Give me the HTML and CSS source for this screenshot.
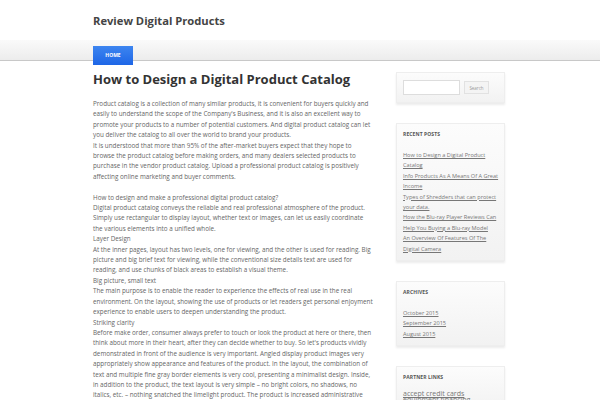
FILE: index.html
```html
<!DOCTYPE html>
<html>
<head>
<meta charset="utf-8">
<link rel="stylesheet" href="styles.css">
</head>
<body>
<header class="site-header">
  <div class="wrap">
    <div class="site-title">Review Digital Products</div>
  </div>
</header>
<nav class="navbar">
  <div class="wrap">
    <a class="nav-item active">HOME</a>
  </div>
</nav>
<div class="wrap page">
  <main class="content">
    <h1 class="entry-title">How to Design a Digital Product Catalog</h1>
    <div class="entry">
      <p>Product catalog is a collection of many similar products, it is convenient for buyers quickly and easily to understand the scope of the Company's Business, and it is also an excellent way to promote your products to a number of potential customers. And digital product catalog can let you deliver the catalog to all over the world to brand your products.<br>
      It is understood that more than 95% of the after-market buyers expect that they hope to browse the product catalog before making orders, and many dealers selected products to purchase in the vendor product catalog. Upload a professional product catalog is positively affecting online marketing and buyer comments.</p>
      <p>How to design and make a professional digital product catalog?<br>
      Digital product catalog conveys the reliable and real professional atmosphere of the product. Simply use rectangular to display layout, whether text or images, can let us easily coordinate the various elements into a unified whole.<br>
      Layer Design<br>
      At the inner pages, layout has two levels, one for viewing, and the other is used for reading. Big picture and big brief text for viewing, while the conventional size details text are used for reading, and use chunks of black areas to establish a visual theme.<br>
      Big picture, small text<br>
      The main purpose is to enable the reader to experience the effects of real use in the real environment. On the layout, showing the use of products or let readers get personal enjoyment experience to enable users to deepen understanding the product.<br>
      Striking clarity<br>
      Before make order, consumer always prefer to touch or look the product at here or there, then think about more in their heart, after they can decide whether to buy. So let's products vividly demonstrated in front of the audience is very important. Angled display product images very appropriately show appearance and features of the product. In the layout, the combination of text and multiple fine gray border elements is very cool, presenting a minimalist design. Inside, in addition to the product, the text layout is very simple – no bright colors, no shadows, no italics, etc. – nothing snatched the limelight product. The product is increased administrative levels by using a variety of colors and sizes to be in an orderly manner.</p>
    </div>
  </main>
  <aside class="sidebar">
    <div class="widget search-widget">
      <input class="search-input" type="text">
      <button class="search-btn">Search</button>
    </div>
    <div class="widget">
      <h3 class="widget-title">RECENT POSTS</h3>
      <ul class="links">
        <li><a>How to Design a Digital Product Catalog</a></li>
        <li><a>Info Products As A Means Of A Great Income</a></li>
        <li><a>Types of Shredders that can protect your data.</a></li>
        <li><a>How the Blu-ray Player Reviews Can Help You Buying a Blu-ray Model</a></li>
        <li><a>An Overview Of Features Of The Digital Camera</a></li>
      </ul>
    </div>
    <div class="widget">
      <h3 class="widget-title">ARCHIVES</h3>
      <ul class="links">
        <li><a>October 2015</a></li>
        <li><a>September 2015</a></li>
        <li><a>August 2015</a></li>
      </ul>
    </div>
    <div class="widget">
      <h3 class="widget-title">PARTNER LINKS</h3>
      <ul class="links partner">
        <li><a>accept credit cards</a></li>
        <li><a>equipment financing</a></li>
      </ul>
    </div>
  </aside>
</div>
</body>
</html>
```
FILE: styles.css
```css
* { box-sizing: border-box; }
html, body { margin: 0; padding: 0; background: #fff; }
body { font-family: "Open Sans", "Liberation Sans", sans-serif; color: #666; overflow: hidden; height: 400px; }
.wrap { width: 414px; margin: 0 auto; }
.site-header { height: 40px; }
.site-title { padding-top: 12px; font-size: 11.2px; font-weight: 700; color: #444; line-height: 17px; }
.navbar {
  height: 21px;
  background: linear-gradient(#fafafa, #ececec);
  border-bottom: 1px solid #c8c8c8;
}
.nav-item {
  display: inline-block;
  margin-top: 1px;
  width: 40px;
  height: 19px;
  line-height: 19px;
  text-align: center;
  font-size: 5px;
  font-weight: 700;
  color: #fff;
  background: linear-gradient(#3d85f0, #1e66e6);
}
.page { display: flex; gap: 23px; }
.content { width: 280px; flex: none; }
.entry-title { margin: 8px 0 10px; font-size: 13px; font-weight: 700; color: #333; line-height: 20px; }
.entry p { margin: 0 0 10.4px; font-size: 6.3px; line-height: 10.4px; color: #666; }
.sidebar { width: 109px; flex: none; padding-top: 11px; }
.widget {
  background: linear-gradient(#fcfcfc, #f2f2f2);
  border: 1px solid #eee;
  box-shadow: 0 2px 2px rgba(0,0,0,0.08);
  padding: 5px 4px 6px 6px;
  margin-bottom: 20px;
}
.search-widget { display: flex; align-items: center; gap: 4px; height: 31px; padding: 6px 6px; }
.search-input { width: 57px; height: 15px; border: 1px solid #ddd; background: #fff; padding: 0; }
.search-btn { width: 25px; height: 13px; font-size: 4.5px; font-family: "Open Sans", sans-serif; color: #999; background: #f4f4f4; border: 1px solid #e2e2e2; padding: 0; }
.widget-title { margin: 2px 0 12px; font-size: 5px; line-height: 7px; font-weight: 700; color: #555; letter-spacing: 0.1px; }
.links { list-style: none; margin: 0; padding: 0; }
.links li { font-size: 5.6px; line-height: 10.4px; }
.links a { color: #777; text-decoration: underline; }
.links.partner { margin-top: -2px; }
.links.partner li { font-size: 7px; line-height: 6px; }
```
